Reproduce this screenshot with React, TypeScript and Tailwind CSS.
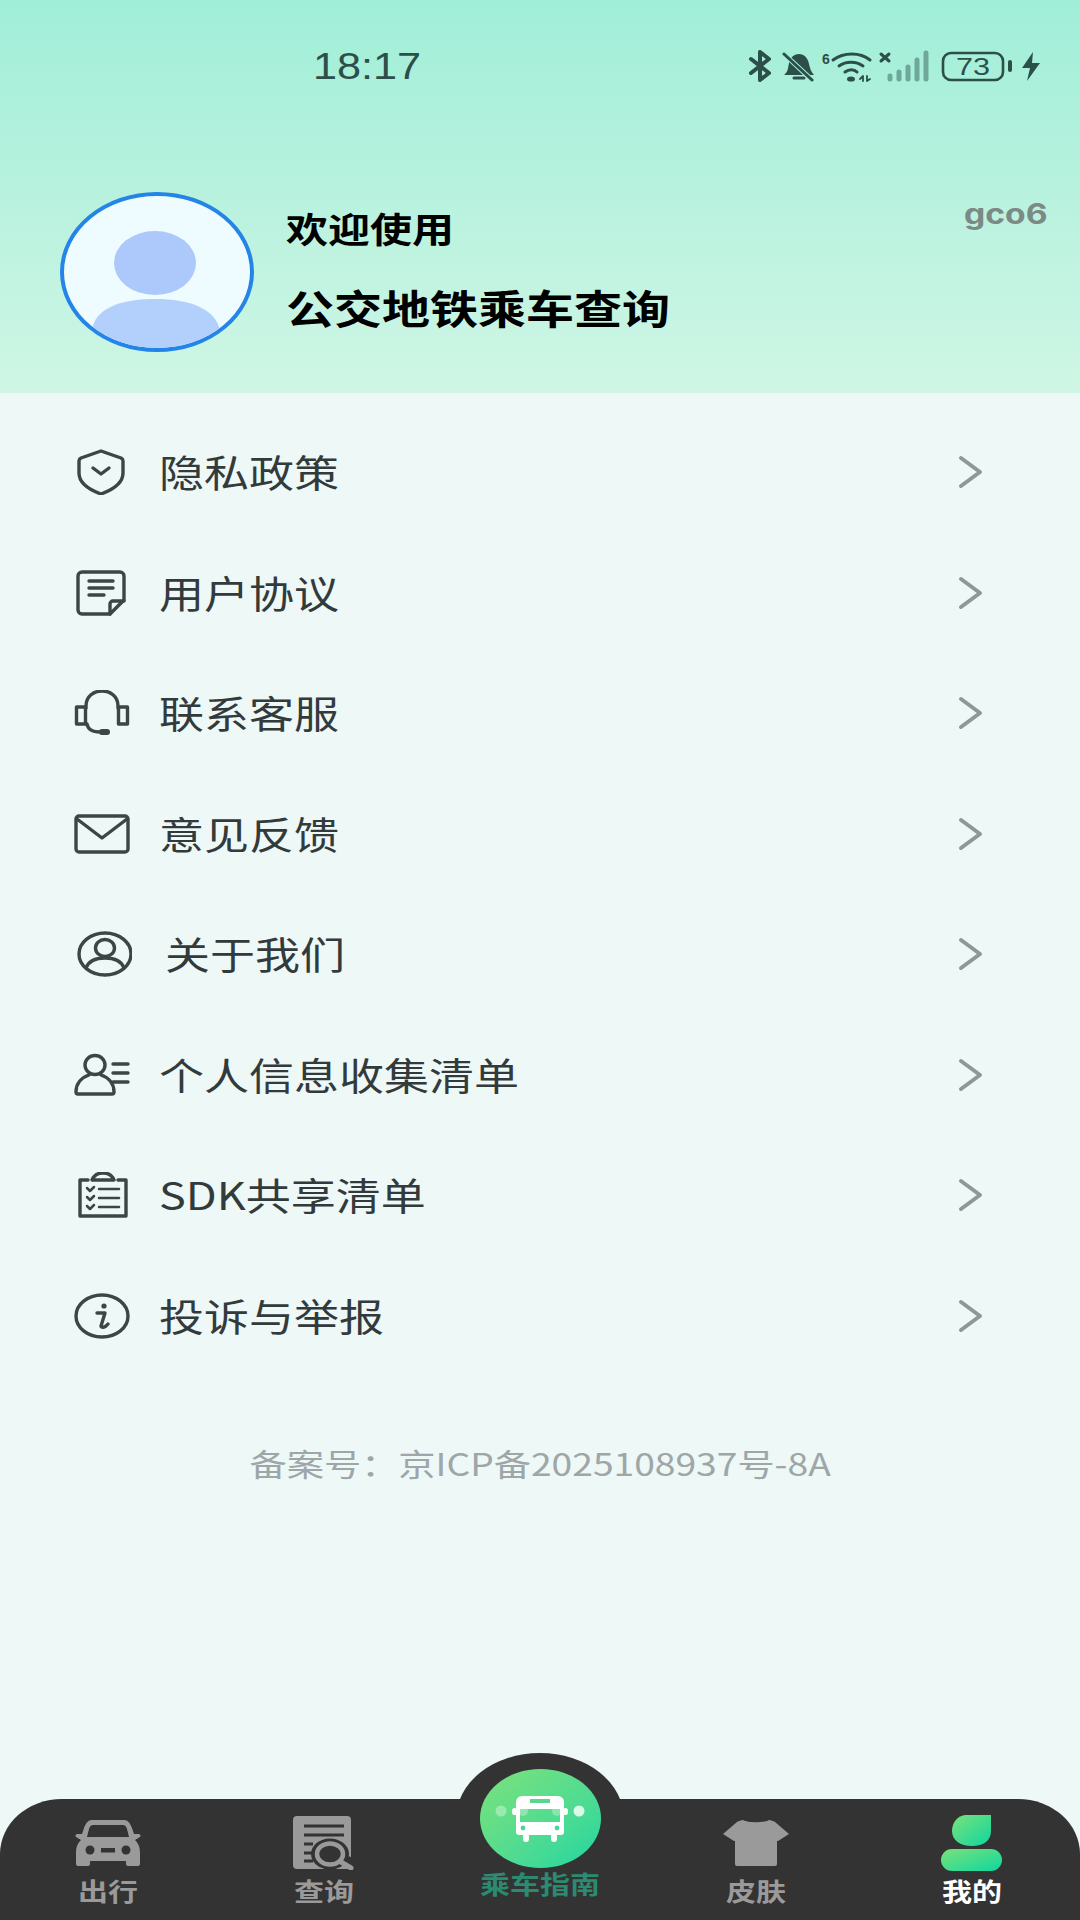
import type { ReactNode } from "react";

const cjk = "font-['Noto_Sans_CJK_SC','Noto_Sans',sans-serif]";

function Wide({ children, center }: { children: ReactNode; center?: boolean }) {
  return (
    <span className={`inline-block whitespace-nowrap scale-x-[1.2] ${center ? "origin-center" : "origin-left"}`}>
      {children}
    </span>
  );
}

function Icon({ w = 58, h = 46, children }: { w?: number; h?: number; children: ReactNode }) {
  return (
    <svg width={w} height={h} viewBox={`0 0 ${w} ${h}`} fill="none" stroke="#3d4546" strokeWidth="3.4" strokeLinecap="round" strokeLinejoin="round">
      {children}
    </svg>
  );
}

const ShieldIcon = () => (
  <Icon>
    <path d="M27 2 L47 9 C49 10 49 11 49 12 V24 C49 35 38 41 27 45 C16 41 5 35 5 24 V12 C5 11 5 10 7 9 Z" />
    <path d="M19 19 L27 25 L35 19" />
  </Icon>
);

const DocIcon = () => (
  <Icon>
    <path d="M8 2 H46 a4 4 0 0 1 4 4 V30 L36 44 H8 a4 4 0 0 1 -4 -4 V6 a4 4 0 0 1 4 -4 Z" />
    <path d="M15 11 H39 M15 18 H39 M15 25 H30" />
    <path d="M36 44 V34 a3 3 0 0 1 3 -3 H50" />
  </Icon>
);

const HeadsetIcon = () => (
  <Icon>
    <path d="M12 18 V16 C12 -4 44 -4 44 16 V18" />
    <rect x="2.5" y="17" width="9" height="17" />
    <rect x="44.5" y="17" width="9" height="17" />
    <path d="M13 34 C14 40 20 42 26 42" />
    <path d="M28 42 H33" strokeWidth="6" />
  </Icon>
);

const MailIcon = () => (
  <Icon>
    <rect x="2" y="5" width="52" height="36" rx="3" />
    <path d="M3 8 L28 27 L53 8" />
  </Icon>
);

const UserCircleIcon = () => (
  <Icon>
    <ellipse cx="31" cy="23" rx="26" ry="21" />
    <ellipse cx="31" cy="17" rx="9.5" ry="8.5" />
    <path d="M12 37 C15 29 24 27 31 27 C38 27 47 29 50 37" />
  </Icon>
);

const UserListIcon = () => (
  <Icon>
    <ellipse cx="21" cy="13" rx="10" ry="9.5" />
    <path d="M15 23 C6 26 2 33 2 40 a2 2 0 0 0 2 2 H38 a2 2 0 0 0 2 -2 C40 33 36 26 27 23" />
    <path d="M39 12 H54 M39 21 H54 M39 30 H54" />
  </Icon>
);

const ChecklistIcon = () => (
  <Icon>
    <path d="M14 8 H6 V44 H52 V8 H44" />
    <path d="M18 8 C20 3 24 1 29 1 C34 1 38 3 40 8 Z" />
    <path d="M13 16 l3 3 l4 -4 M13 25 l3 3 l4 -4 M13 34 l3 3 l4 -4" strokeWidth="2.5" />
    <path d="M25 17 H45 M25 26 H45 M25 35 H45" strokeWidth="2.5" />
  </Icon>
);

const InfoIcon = () => (
  <Icon>
    <ellipse cx="28" cy="23" rx="26" ry="21" />
    <circle cx="30" cy="13" r="2.6" fill="#3d4546" stroke="none" />
    <path d="M23 20 H31 L27 33 C27 35 31 35 34 31" />
  </Icon>
);

const menu = [
  { label: "隐私政策", icon: <ShieldIcon /> },
  { label: "用户协议", icon: <DocIcon /> },
  { label: "联系客服", icon: <HeadsetIcon /> },
  { label: "意见反馈", icon: <MailIcon /> },
  { label: "关于我们", icon: <UserCircleIcon />, shift: true },
  { label: "个人信息收集清单", icon: <UserListIcon /> },
  { label: "SDK共享清单", icon: <ChecklistIcon /> },
  { label: "投诉与举报", icon: <InfoIcon /> },
];

function StatusIcons() {
  return (
    <svg width="296" height="32" viewBox="0 0 296 32" fill="none" stroke="#2c4f4a" strokeLinecap="round" strokeLinejoin="round">
      {/* bluetooth */}
      <path d="M3 9 L21 23 L12 30 V16 M3 23 L21 9 L12 2 V16" strokeWidth="4" />
      {/* muted bell */}
      <path d="M36 25 C40 22 40 18 41 13 C42 7 47 4 51 4 C56 4 60 8 61 14 C62 18 63 22 66 25 Z" fill="#2c4f4a" stroke="none" />
      <path d="M46 28 H56" strokeWidth="3" />
      <path d="M36 4 L64 30" stroke="#a0eed8" strokeWidth="5" />
      <path d="M36 4 L64 30" strokeWidth="3" />
      {/* wifi */}
      <text x="74" y="14" fontSize="14" fontWeight="700" fill="#2c4f4a" stroke="none" fontFamily="'Liberation Sans',sans-serif">6</text>
      <path d="M85 10 C96 2 112 2 122 10 M91 16 C98 11 108 11 115 16 M97 22 C101 19 106 19 109 22" strokeWidth="3" />
      <ellipse cx="103" cy="29" rx="4" ry="2.6" fill="#2c4f4a" stroke="none" />
      <path d="M112 29 L115 26 V31 M119 26 V31 L122 29" strokeWidth="1.8" />
      {/* signal */}
      <path d="M133 4 L141 11 M141 4 L133 11" strokeWidth="3" />
      <g stroke="#6fa79a" strokeWidth="5">
        <path d="M142 26 V29 M151 22 V29 M160 17 V29 M169 10 V29 M178 3 V29" />
      </g>
      {/* battery */}
      <rect x="195" y="3" width="60" height="27" rx="8" strokeWidth="2.6" />
      <text x="225" y="25" textAnchor="middle" fontSize="24" fill="#2c4f4a" stroke="none" fontFamily="'Liberation Sans',sans-serif" textLength="34" lengthAdjust="spacingAndGlyphs">73</text>
      <path d="M262 12 V20" strokeWidth="4" />
      {/* charging bolt */}
      <path d="M285 2 L274 18 H282 L279 31 L292 13 H284 Z" fill="#2c4f4a" stroke="none" />
    </svg>
  );
}

function Avatar() {
  return (
    <div className="w-[194px] h-[160px] shrink-0 rounded-[50%] border-[4px] border-[#2484e8] bg-[#effcff] overflow-hidden">
      <svg width="186" height="152" viewBox="0 0 186 152">
        <ellipse cx="91" cy="67" rx="41" ry="32" fill="#adc8fb" />
        <path d="M28 134 C31 113 55 103 91 103 C127 103 151 113 156 134 L156 160 H28 Z" fill="#b2d0fb" />
      </svg>
    </div>
  );
}

const CarIcon = () => (
  <svg width="66" height="46" viewBox="0 0 66 46" fill="#9a9a9a">
    <path fillRule="evenodd" d="M17 0 H49 C53 0 55 3 57 8 L59 14 H64 a2 2 0 0 1 1 3 L60 20 C64 24 65 28 65 33 V44 a2 2 0 0 1 -2 2 H53 a2 2 0 0 1 -2 -2 V41 H15 V44 a2 2 0 0 1 -2 2 H3 a2 2 0 0 1 -2 -2 V33 C1 28 2 24 6 20 L1 17 a2 2 0 0 1 1 -3 H7 L9 8 C11 3 13 0 17 0 Z M18 5 C16 5 15 6 14 9 L12 17 H54 L52 9 C51 6 50 5 48 5 Z" />
    <circle cx="15" cy="30" r="4.5" fill="#333333" />
    <circle cx="51" cy="30" r="4.5" fill="#333333" />
    <rect x="26" y="28" width="14" height="4.5" fill="#333333" />
  </svg>
);

const QueryIcon = () => (
  <svg width="62" height="54" viewBox="0 0 62 54">
    <rect x="0" y="0" width="58" height="53" rx="4" fill="#9a9a9a" />
    <path d="M11 10 H51 M11 19 H51 M11 28 H20 M11 37 H20 M11 45 H20" stroke="#333333" strokeWidth="3" />
    {/* dark halo round the lens */}
    <ellipse cx="37" cy="38" rx="19" ry="15.5" fill="#333333" />
    <path d="M50 49 L58 54 H62 V44 L56 40 Z" fill="#333333" />
    <ellipse cx="37" cy="38" rx="13" ry="10.5" fill="#333333" stroke="#9a9a9a" strokeWidth="4.5" />
    <path d="M48 46 L58 52" stroke="#9a9a9a" strokeWidth="5" strokeLinecap="round" />
  </svg>
);

const ShirtIcon = () => (
  <svg width="66" height="46" viewBox="0 0 66 46" fill="#9a9a9a">
    <path d="M20 0 C25 3 41 3 46 0 C48 0 50 1 52 2 L66 14 L55 21 H54 V44 a2 2 0 0 1 -2 2 H14 a2 2 0 0 1 -2 -2 V21 H11 L0 14 L14 2 C16 1 18 0 20 0 Z" />
  </svg>
);

const MeIcon = () => (
  <svg width="62" height="56" viewBox="0 0 62 56">
    <defs>
      <linearGradient id="me" x1="0" y1="0" x2="1" y2="1">
        <stop offset="0" stopColor="#7ae27a" />
        <stop offset="1" stopColor="#0fd6a0" />
      </linearGradient>
    </defs>
    <path d="M24 0 H50 V16 C50 26 42 31 31 31 C19 31 11 25 11 16 C11 8 16 1 24 0 Z" fill="url(#me)" />
    <rect x="0" y="34" width="61" height="22" rx="11" fill="url(#me)" />
  </svg>
);

const BusIcon = () => (
  <svg width="94" height="46" viewBox="0 0 94 46">
    <circle cx="8" cy="15" r="5.5" fill="#ffffff" opacity="0.35" />
    <circle cx="86" cy="15" r="5.5" fill="#ffffff" opacity="0.8" />
    <path fillRule="evenodd" d="M29 0 H65 a6 6 0 0 1 6 6 V36 a3 3 0 0 1 -3 3 H64 V43 a3 3 0 0 1 -6 0 V39 H36 V43 a3 3 0 0 1 -6 0 V39 H26 a3 3 0 0 1 -3 -3 V6 a6 6 0 0 1 6 -6 Z M27 13 V26 H67 V13 Z" fill="#ffffff" />
    <rect x="37" y="3" width="20" height="4" fill="#5bd68e" />
    <rect x="19" y="12" width="5" height="7" rx="2.5" fill="#ffffff" />
    <rect x="70" y="12" width="5" height="7" rx="2.5" fill="#ffffff" />
    <circle cx="30" cy="32" r="2.4" fill="#4fd49a" />
    <circle cx="64" cy="32" r="2.4" fill="#4fd49a" />
    <circle cx="30" cy="15" r="5" fill="#ffffff" opacity="0.3" />
    <circle cx="64" cy="15" r="5" fill="#ffffff" opacity="0.3" />
  </svg>
);

function Tab({ label, icon, active }: { label: string; icon: ReactNode; active?: boolean }) {
  return (
    <div className="flex flex-col items-center">
      <div className="h-[56px] mt-[16px] flex items-center justify-center">{icon}</div>
      <div className={`mt-[4px] text-[25px] leading-[30px] font-bold ${active ? "text-white" : "text-[#9a9a9a]"}`}>
        <Wide center>{label}</Wide>
      </div>
    </div>
  );
}

export default function App() {
  return (
    <div className={`w-[1080px] h-[1920px] flex flex-col overflow-hidden bg-[#edf8f7] ${cjk}`}>
      {/* Header */}
      <header className="h-[393px] shrink-0 bg-gradient-to-b from-[#a0eed8] to-[#cff6e5]">
        <div className="h-[192px] flex items-start">
          <div className="mt-[45px] ml-[313px] text-[36px] leading-[44px] text-[#2c4f4a] font-['Liberation_Sans',sans-serif]">
            <Wide>18:17</Wide>
          </div>
          <div className="mt-[50px] ml-[345px]">
            <StatusIcons />
          </div>
        </div>
        <div className="flex pl-[60px]">
          <Avatar />
          <div className="ml-[32px] text-black font-bold">
            <div className="mt-[14px] text-[35px] leading-[44px]"><Wide>欢迎使用</Wide></div>
            <div className="mt-[31px] text-[40px] leading-[52px]"><Wide>公交地铁乘车查询</Wide></div>
          </div>
          <div className="ml-auto mr-[32px] h-fit text-[#7b8a85] text-[28px] leading-[44px] font-bold font-['Inter',sans-serif]">
            <span className="inline-block origin-right scale-x-[1.2]">gco6</span>
          </div>
        </div>
      </header>

      {/* Menu */}
      <main className="flex-1 pt-[19px]">
        {menu.map((item) => (
          <div key={item.label} className="h-[120.5px] flex items-center pl-[74px] pr-[97px]">
            <div className="w-[58px] h-[46px] shrink-0">{item.icon}</div>
            <div className={`-mt-[2px] text-[37.5px] leading-[46px] text-[#333a3b] ${item.shift ? "ml-[33px]" : "ml-[27px]"}`}>
              <Wide>{item.label}</Wide>
            </div>
            <svg className="ml-auto" width="25" height="34" viewBox="0 0 25 34" fill="none" stroke="#8f9899" strokeWidth="4" strokeLinecap="round" strokeLinejoin="round">
              <path d="M3 3 L22 17 L3 31" />
            </svg>
          </div>
        ))}
        <div className="mt-[69px] text-center text-[31px] leading-[36px] text-[#9ea6a7]">
          <Wide center>备案号：京ICP备2025108937号-8A</Wide>
        </div>
      </main>

      {/* Bottom nav */}
      <nav className="relative h-[121px] shrink-0 grid grid-cols-5 bg-[#333333] rounded-tl-[62px_55px] rounded-tr-[62px_55px]">
        <div className="absolute left-[456px] -top-[46px] w-[168px] h-[132px] rounded-[50%] bg-[#333333]" />
        <Tab label="出行" icon={<CarIcon />} />
        <Tab label="查询" icon={<QueryIcon />} />
        <div className="relative flex flex-col items-center -mt-[30px]">
          <div className="w-[121px] h-[99px] rounded-[50%] bg-gradient-to-br from-[#7ae27a] to-[#0fd6a0] flex items-center justify-center">
            <BusIcon />
          </div>
          <div className="text-[25px] leading-[30px] font-bold text-[#2b8a70]">
            <Wide center>乘车指南</Wide>
          </div>
        </div>
        <Tab label="皮肤" icon={<ShirtIcon />} />
        <Tab label="我的" icon={<MeIcon />} active />
      </nav>
    </div>
  );
}
